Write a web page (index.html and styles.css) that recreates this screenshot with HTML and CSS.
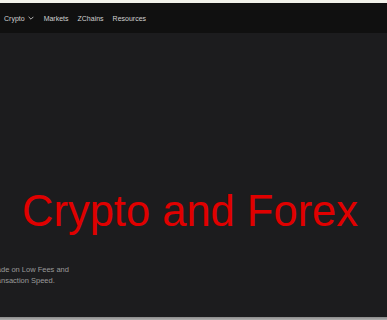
FILE: index.html
```html
<!DOCTYPE html>
<html lang="en">
<head>
    <meta charset="UTF-8">
    <meta name="viewport" content="width=device-width, initial-scale=1.0">
    <title>Crypto and Forex</title>
    <link rel="stylesheet" href="styles.css">
</head>
<body>
    <div class="top-strip"></div>

    <nav class="nav">
        <a class="nav-item" href="#">Crypto
            <svg class="chevron" viewBox="0 0 10 6" width="6" height="4">
                <path d="M1 1l4 4 4-4" fill="none" stroke="currentColor" stroke-width="1.4"/>
            </svg>
        </a>
        <a class="nav-item" href="#">Markets</a>
        <a class="nav-item" href="#">ZChains</a>
        <a class="nav-item" href="#">Resources</a>
    </nav>

    <main class="hero">
        <h1 class="hero-title">Crypto and Forex</h1>
        <p class="hero-text">Trade on Low Fees and<br>Transaction Speed.</p>
    </main>

    <div class="bottom-bar"></div>
</body>
</html>
```

FILE: styles.css
```css
body {
    margin: 0;
    height: 320px;
    overflow: hidden;
    display: flex;
    flex-direction: column;
    font-family: 'Liberation Sans', Arial, sans-serif;
    background: #1c1c1e;
}

.top-strip {
    height: 3px;
    background: #f2f2ea;
}

.nav {
    height: 30px;
    display: flex;
    align-items: center;
    gap: 9px;
    padding-left: 4px;
    background: #101010;
}

.nav-item {
    display: flex;
    align-items: center;
    gap: 3px;
    font-size: 7px;
    color: #d0d0d0;
    text-decoration: none;
}

.chevron {
    margin-right: 1px;
}

.hero {
    flex: 1;
    overflow: hidden;
    padding-top: 154px;
    background: #1c1c1e;
}

.hero-title {
    margin: 0 0 0 22px;
    font-size: 43.5px;
    line-height: 49px;
    font-weight: normal;
    color: #e00000;
    white-space: nowrap;
}

.hero-text {
    margin: 28px 0 0 -10px;
    font-size: 7.5px;
    line-height: 11px;
    color: #9a9a9a;
}

.bottom-bar {
    height: 3px;
    background: linear-gradient(#8a8a8a, #b0b0b0);
}
```
